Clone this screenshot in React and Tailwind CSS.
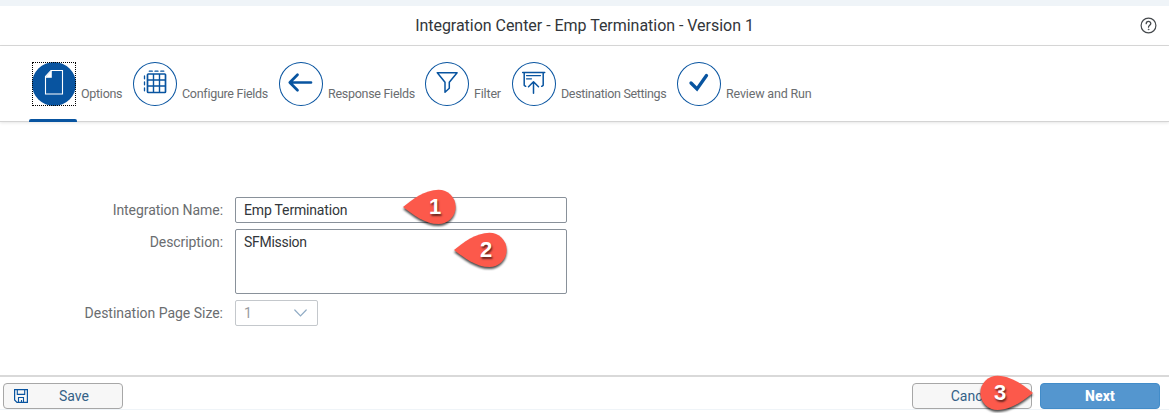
import React from "react";

const PageIcon = () => (
  <svg width="44" height="44" viewBox="0 0 44 44" fill="none">
    <path d="M19 8.500h11.500v23.500h-17V14.500z" stroke="#fff" strokeWidth="1.100" />
    <path d="M13.500 15.500L19.500 8.500v7z" fill="#fff" stroke="#fff" strokeWidth="0.600" />
  </svg>
);

const GridIcon = () => (
  <svg width="44" height="44" viewBox="0 0 44 44" fill="none" stroke="#0854a0">
    <rect x="14.500" y="12" width="18" height="18.500" rx="0.800" strokeWidth="1.700" />
    <path d="M20.500 12v18M26.500 12v18M14.500 18h18M14.500 24h18" strokeWidth="1.400" />
    <path d="M16.300 9.200h3M22 9.200h3M27.800 9.200h3M11.500 14v2.800M11.500 20v2.800M11.500 26v2.800" strokeWidth="1.300" strokeLinecap="round" />
  </svg>
);

const ArrowIcon = () => (
  <svg width="44" height="44" viewBox="0 0 44 44" fill="none" stroke="#0854a0" strokeWidth="2.700" strokeLinecap="round" strokeLinejoin="round">
    <path d="M32 20.500H11M18.500 12.800L10.800 20.500l7.700 7.700" />
  </svg>
);

const FilterIcon = () => (
  <svg width="44" height="44" viewBox="0 0 44 44" fill="none" stroke="#0854a0" strokeWidth="1.500" strokeLinejoin="round">
    <path d="M12.300 10.700h19.800l-7.800 9.600v6L20 30.300v-10z" />
  </svg>
);

const UploadIcon = () => (
  <svg width="44" height="44" viewBox="0 0 44 44" fill="none" stroke="#0854a0" strokeWidth="1.500" strokeLinecap="round" strokeLinejoin="round">
    <path d="M10.700 10.600h22M12.200 10.600v12.700l1.500 1M31.200 10.600v12.700l-1.500 1" />
    <path d="M14.500 13.600h14M14.500 16.800h5" strokeWidth="1.200" />
    <path d="M21.500 31.300V19.800M16.500 24.800l5-5 5 5" />
  </svg>
);

const CheckIcon = () => (
  <svg width="44" height="44" viewBox="0 0 44 44" fill="none" stroke="#0854a0" strokeWidth="3.300" strokeLinecap="round">
    <path d="M14 21l6 6 9.500-13.500" />
  </svg>
);

const steps = [
  { label: "Options", icon: <PageIcon />, width: "w-[101px]", track: "tracking-[-0.28px]", active: true },
  { label: "Configure Fields", icon: <GridIcon />, width: "w-[146px]", track: "tracking-[-0.28px]" },
  { label: "Response Fields", icon: <ArrowIcon />, width: "w-[146px]", track: "tracking-[-0.28px]" },
  { label: "Filter", icon: <FilterIcon />, width: "w-[87px]", track: "tracking-[-0.17px]" },
  { label: "Destination Settings", icon: <UploadIcon />, width: "w-[165px]", track: "tracking-[-0.33px]" },
  { label: "Review and Run", icon: <CheckIcon />, width: "w-[150px]", track: "tracking-[-0.16px]" },
];

function Step({ label, icon, width, track, active }) {
  return (
    <div className={`relative flex h-full shrink-0 gap-[5px] pt-4 ${width}`}>
      <div
        className={
          active
            ? "size-11 shrink-0 rounded-full bg-[#0854a0]"
            : "size-11 shrink-0 rounded-full shadow-[inset_0_0_0_1px_#0854a0]"
        }
      >
        {icon}
      </div>
      {active && <div className="absolute left-0 top-4 size-11 border border-dotted border-black" />}
      <span className={`mt-[22px] whitespace-nowrap text-[12.5px] leading-5 text-[#6a6d70] ${track}`}>{label}</span>
      {active && <div className="absolute -left-[3px] top-[73px] h-[3px] w-12 rounded-t-[2px] bg-[#0854a0]" />}
    </div>
  );
}

function Marker({ number, className, right }) {
  return (
    <div className={`absolute h-9 w-[53px] ${className}`}>
      <svg
        className={`absolute inset-0 overflow-visible drop-shadow-[0_2px_1px_rgba(0,0,0,0.7)] ${right ? "-scale-x-100" : ""}`}
        width="53"
        height="36"
        viewBox="0 0 53 36"
      >
        <path d="M0 18C9 10.500 22 0.700 35.500 0.700A17.200 17.200 0 0 1 35.500 35.100C22 35.100 9 25 0 18Z" fill="#fc594b" />
      </svg>
      <span
        className={`absolute top-0 w-5 text-center font-['Liberation_Sans',sans-serif] text-[22px] font-bold leading-9 text-white [text-shadow:1px_2px_2px_rgba(0,0,0,0.6)] ${right ? "left-[10px]" : "left-[22px]"}`}
      >
        {number}
      </span>
    </div>
  );
}

export default function App() {
  return (
    <div className="relative flex h-[413px] w-[1169px] flex-col overflow-hidden bg-white font-['Roboto',sans-serif] text-sm text-[#32363a]">
      <div className="h-1.5 shrink-0 bg-[#eff4f8]" />
      <header className="grid h-10 shrink-0 grid-cols-[1fr_auto_1fr] items-center border-b border-[#d9d9d9] pr-[12px]">
        <h1 className="col-start-2 whitespace-nowrap pl-3 text-base tracking-[-0.03px]">
          Integration Center - Emp Termination - Version 1
        </h1>
        <svg className="justify-self-end" width="17" height="17" viewBox="0 0 17 17" fill="none" stroke="#45494d" strokeLinecap="round">
          <circle cx="8.500" cy="8.500" r="7.400" strokeWidth="1.200" />
          <path d="M6.200 6.700c0-3 4.600-3 4.600-.2 0 1.700-2.300 1.900-2.300 3.700" strokeWidth="1.300" />
          <circle cx="8.500" cy="12.400" r="0.450" fill="#45494d" strokeWidth="0.600" />
        </svg>
      </header>
      <nav className="flex h-[76px] shrink-0 border-b border-[#d4d4d4] pl-8 shadow-[0_1px_3px_rgba(0,0,0,0.1)]">
        {steps.map((step) => (
          <Step key={step.label} {...step} />
        ))}
      </nav>
      <main className="grid grow grid-cols-[223px_332px] content-start gap-x-3 pt-[75px]">
        <label className="h-[26px] text-right leading-[26px] tracking-[-0.06px] text-[#6a6d70]">Integration Name:</label>
        <div className="mb-1.5 h-[26px] rounded-[2px] border border-[#89919a] pl-2 leading-6 tracking-[-0.17px]">Emp Termination</div>
        <label className="h-[26px] text-right leading-[26px] tracking-[-0.08px] text-[#6a6d70]">Description:</label>
        <div className="mb-1.5 h-[65px] rounded-[2px] border border-[#89919a] pl-2 leading-6 tracking-[-0.28px]">SFMission</div>
        <label className="h-[26px] text-right leading-[26px] tracking-[-0.02px] text-[#6a6d70]">Destination Page Size:</label>
        <div className="flex h-[26px] w-[83px] items-center justify-between rounded-[2px] border border-[#c4c8cc] pl-2 pr-2.5 text-[#999c9f]">
          <span>1</span>
          <svg width="13" height="8" viewBox="0 0 13 8" fill="none" stroke="#91acc5" strokeWidth="1.200" strokeLinecap="round">
            <path d="M0.800 1l5.700 6 5.700-6" />
          </svg>
        </div>
      </main>
      <footer className="flex h-[38px] shrink-0 border-t-2 border-[#d9d9d9] pl-[3px] pr-[9px] pt-[6px]">
        <button className="flex h-[26px] w-[120px] items-center rounded-[4px] border border-[#a7a7a7] bg-[#f7f7f7] pl-[10px] text-[#346187]">
          <svg width="14" height="14" viewBox="0 0 14 14" fill="none" stroke="#0854a0">
            <path d="M.6.600h12.800v12.800H3L.6 11z" strokeWidth="1.200" />
            <path d="M3.300.600v4.800h7.400V.600M4.500 13.400V8.500h5v4.900M7.500 11v2" strokeWidth="1.100" />
          </svg>
          <span className="ml-[31px]">Save</span>
        </button>
        <button className="ml-auto h-[26px] w-[120px] rounded-[4px] border border-[#a7a7a7] bg-[#f7f7f7] leading-6 text-[#346187]">
          Cancel
        </button>
        <button className="ml-2 h-[26px] w-[120px] rounded-[4px] border border-[#428cc9] bg-[#5496cf] font-extrabold leading-6 tracking-[0.1px] text-white">
          Next
        </button>
      </footer>
      <div className="absolute inset-x-0 top-[409px] h-px bg-[#eff4f8]" />
      <Marker number="1" className="left-[403px] top-[189px]" />
      <Marker number="2" className="left-[454px] top-[232px]" />
      <Marker number="3" className="left-[980px] top-[375px]" right />
    </div>
  );
}
